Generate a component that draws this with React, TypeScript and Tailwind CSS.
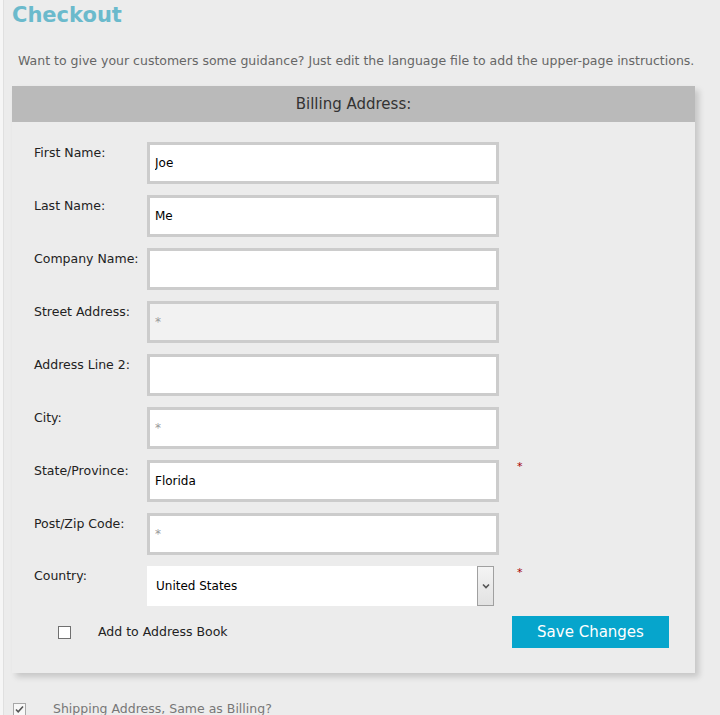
import { useState } from 'react'

const fields = [
  { label: 'First Name:', value: 'Joe' },
  { label: 'Last Name:', value: 'Me' },
  { label: 'Company Name:', value: '' },
  { label: 'Street Address:', value: '', placeholder: '*', muted: true },
  { label: 'Address Line 2:', value: '' },
  { label: 'City:', value: '', placeholder: '*' },
  { label: 'State/Province:', value: 'Florida', required: true },
  { label: 'Post/Zip Code:', value: '', placeholder: '*' },
]

const font = { fontFamily: '"DejaVu Sans", Verdana, sans-serif' }

function Required() {
  return <span className="ml-[18px] mt-[1px] text-[11px] leading-none text-[#a40000]">*</span>
}

export default function App() {
  const [values, setValues] = useState(fields.map((f) => f.value))
  const [addBook, setAddBook] = useState(false)
  const [same, setSame] = useState(true)

  return (
    <div className="min-h-[715px] bg-[#f6f6f6] pl-[3px]" style={font}>
      <div className="min-h-[715px] border-l border-[#e0e0e0] bg-[#ececec] pl-[8px] pr-[16px]">
        <h1 className="pt-[2px] text-[21px] font-bold leading-[26px] text-[#6bbacc]">Checkout</h1>
        <p className="mt-[25px] whitespace-nowrap pl-[6px] text-[12.5px] leading-[16px] text-[#666666]">
          Want to give your customers some guidance? Just edit the language file to add the upper-page instructions.
        </p>

        <section className="mt-[17px] w-[683px] bg-[#ececec] shadow-[4px_4px_6px_rgba(0,0,0,0.16)]">
          <h2 className="flex h-[36px] items-center justify-center bg-[#bababa] text-[15px] text-[#333333]">
            Billing Address:
          </h2>

          <div className="flex flex-col gap-[11px] pl-[22px] pt-[20px]">
            {fields.map((f, i) => (
              <div key={f.label} className="flex items-start">
                <label className="w-[113px] pt-[3px] text-[12.5px] leading-[16px] text-[#222222]">{f.label}</label>
                <input
                  value={values[i]}
                  placeholder={f.placeholder}
                  onChange={(e) => setValues((v) => v.map((x, j) => (j === i ? e.target.value : x)))}
                  className={`h-[42px] w-[352px] border-[3px] border-[#cccccc] px-[5px] text-[12px] text-black outline-none placeholder:text-[#999999] ${
                    f.muted ? 'bg-[#f2f2f2]' : 'bg-white'
                  }`}
                  style={font}
                />
                {f.required ? <Required /> : null}
              </div>
            ))}

            <div className="flex items-start">
              <label className="w-[113px] pt-[2px] text-[12.5px] leading-[16px] text-[#222222]">Country:</label>
              <div className="flex h-[40px] w-[347px] items-center bg-white pl-[9px] text-[12px] text-black">
                <span className="flex-1">United States</span>
                <span className="flex h-[40px] w-[17px] items-center justify-center border border-[#a0a0a0] bg-gradient-to-b from-[#f4f4f4] to-[#e2e2e2]">
                  <svg width="8" height="6" viewBox="0 0 8 6" fill="none">
                    <path d="M1 1.5l3 3 3-3" stroke="#555" strokeWidth="1.6" />
                  </svg>
                </span>
              </div>
              <span className="ml-[23px] mt-[1px] text-[11px] leading-none text-[#a40000]">*</span>
            </div>
          </div>

          <div className="mt-[10px] flex items-center pb-[25px]">
            <button
              type="button"
              onClick={() => setAddBook((v) => !v)}
              className="ml-[46px] flex h-[13px] w-[13px] items-center justify-center border border-[#707070] bg-white"
            >
              {addBook ? (
                <svg width="9" height="9" viewBox="0 0 9 9" fill="none">
                  <path d="M1 4.5l2.2 2.3L8 1.5" stroke="#333" strokeWidth="1.6" />
                </svg>
              ) : null}
            </button>
            <span className="ml-[27px] text-[12.5px] text-[#222222]">Add to Address Book</span>
            <button
              type="button"
              className="ml-auto mr-[26px] h-[32px] w-[157px] bg-[#06a5cc] text-[15px] text-white"
              style={font}
            >
              Save Changes
            </button>
          </div>
        </section>

        <div className="mt-[27px] flex items-center">
          <button
            type="button"
            onClick={() => setSame((v) => !v)}
            className="ml-[1px] flex h-[13px] w-[13px] items-center justify-center border border-[#a8a8a8] bg-[#f8f8f8]"
          >
            {same ? (
              <svg width="9" height="9" viewBox="0 0 9 9" fill="none">
                <path d="M1 4.5l2.2 2.3L8 1.5" stroke="#555" strokeWidth="1.6" />
              </svg>
            ) : null}
          </button>
          <span className="ml-[27px] text-[12.5px] text-[#777777]">Shipping Address, Same as Billing?</span>
        </div>
      </div>
    </div>
  )
}
